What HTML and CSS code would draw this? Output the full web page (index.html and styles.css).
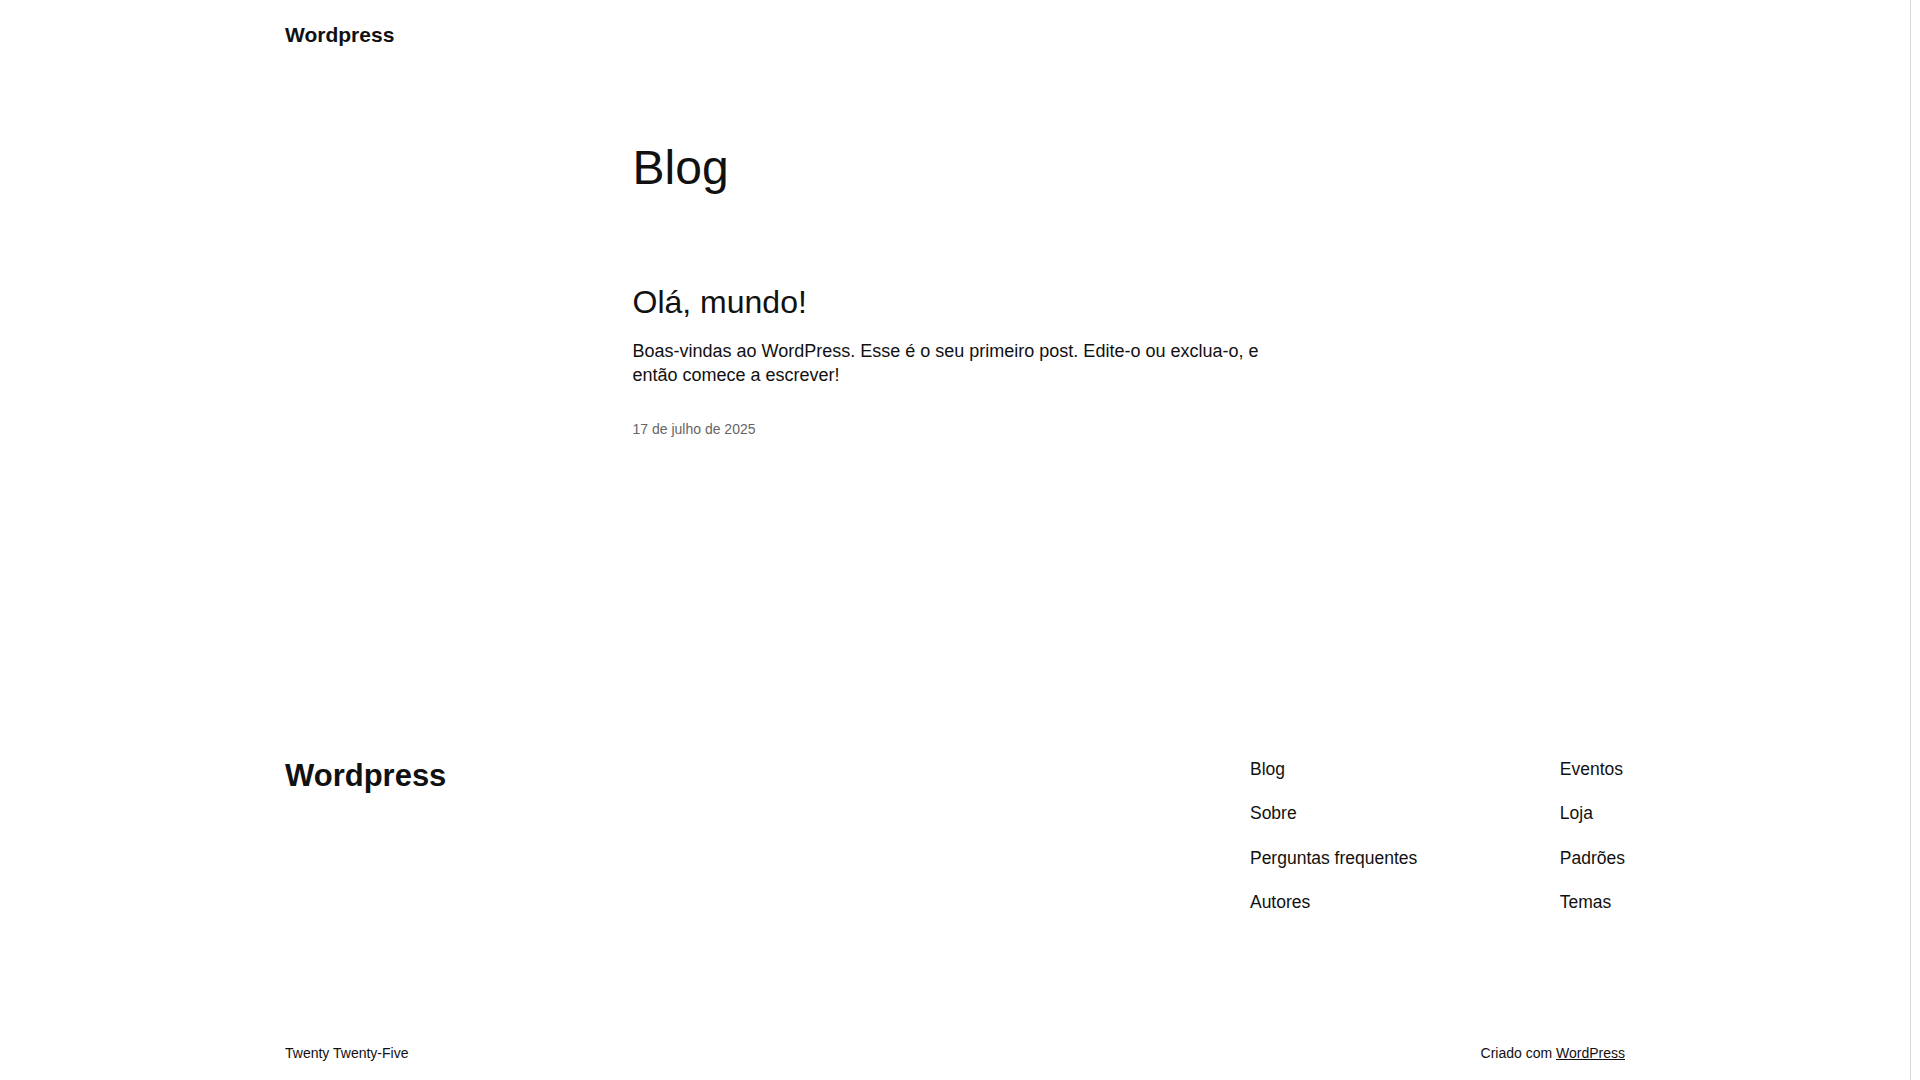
FILE: index.html
```html
<!DOCTYPE html>
<html lang="pt-BR">
<head>
<meta charset="utf-8">
<title>Blog – Wordpress</title>
<link rel="stylesheet" href="styles.css">
</head>
<body>
<div class="page">
  <header class="site-header">
    <p class="site-title"><a href="#">Wordpress</a></p>
  </header>
  <main class="site-main">
    <h1 class="page-title">Blog</h1>
    <article class="post">
      <h2 class="post-title"><a href="#">Olá, mundo!</a></h2>
      <p class="post-excerpt">Boas-vindas ao WordPress. Esse é o seu primeiro post. Edite-o ou exclua-o, e então comece a escrever!</p>
      <p class="post-date">17 de julho de 2025</p>
    </article>
  </main>
  <footer class="site-footer">
    <div class="footer-top">
      <p class="footer-title"><a href="#">Wordpress</a></p>
      <div class="footer-navs">
        <ul class="footer-nav">
          <li><a href="#">Blog</a></li>
          <li><a href="#">Sobre</a></li>
          <li><a href="#">Perguntas frequentes</a></li>
          <li><a href="#">Autores</a></li>
        </ul>
        <ul class="footer-nav">
          <li><a href="#">Eventos</a></li>
          <li><a href="#">Loja</a></li>
          <li><a href="#">Padrões</a></li>
          <li><a href="#">Temas</a></li>
        </ul>
      </div>
    </div>
    <div class="footer-bottom">
      <p class="theme-name">Twenty Twenty-Five</p>
      <p class="credit">Criado com <a href="#">WordPress</a></p>
    </div>
  </footer>
</div>
<div class="scrollbar" aria-hidden="true"></div>
</body>
</html>
```
FILE: styles.css
```css
html, body {
  margin: 0;
  padding: 0;
  background: #ffffff;
}
body {
  font-family: "Liberation Sans", Arial, sans-serif;
  color: #111111;
}
a {
  color: inherit;
  text-decoration: none;
}
p, h1, h2, ul {
  margin: 0;
}

.page {
  margin-right: 10px;
}

.scrollbar {
  position: fixed;
  top: 0;
  right: 0;
  bottom: 0;
  width: 9px;
  border-left: 1px solid #dcdcdc;
  background: #ffffff;
}

.site-header {
  max-width: 1340px;
  margin: 0 auto;
  padding-top: 22px;
}
.site-title {
  font-size: 21px;
  font-weight: 700;
  line-height: 25px;
}

.site-main {
  width: 645px;
  margin: 0 auto;
}
.page-title {
  margin-top: 91.6px;
  font-size: 48px;
  font-weight: 400;
  line-height: 58px;
}
.post-title {
  margin-top: 86.3px;
  font-size: 32px;
  font-weight: 400;
  line-height: 38px;
}
.post-excerpt {
  margin-top: 17.7px;
  font-size: 18px;
  line-height: 24.4px;
}
.post-date {
  margin-top: 31.6px;
  font-size: 14px;
  line-height: 20px;
  color: #666666;
}

.site-footer {
  max-width: 1340px;
  margin: 0 auto;
  padding-top: 318px;
  padding-bottom: 40px;
}
.footer-top {
  display: flex;
  justify-content: space-between;
  align-items: flex-start;
}
.footer-title {
  font-size: 31px;
  font-weight: 700;
  line-height: 37px;
}
.footer-navs {
  display: flex;
  gap: 142.5px;
}
.footer-nav {
  list-style: none;
  padding: 0;
  display: flex;
  flex-direction: column;
  gap: 19.4px;
  font-size: 17.5px;
  line-height: 25px;
}
.footer-bottom {
  display: flex;
  justify-content: space-between;
  margin-top: 128px;
  font-size: 14px;
  line-height: 20px;
}
.credit a {
  text-decoration: underline;
}
```
